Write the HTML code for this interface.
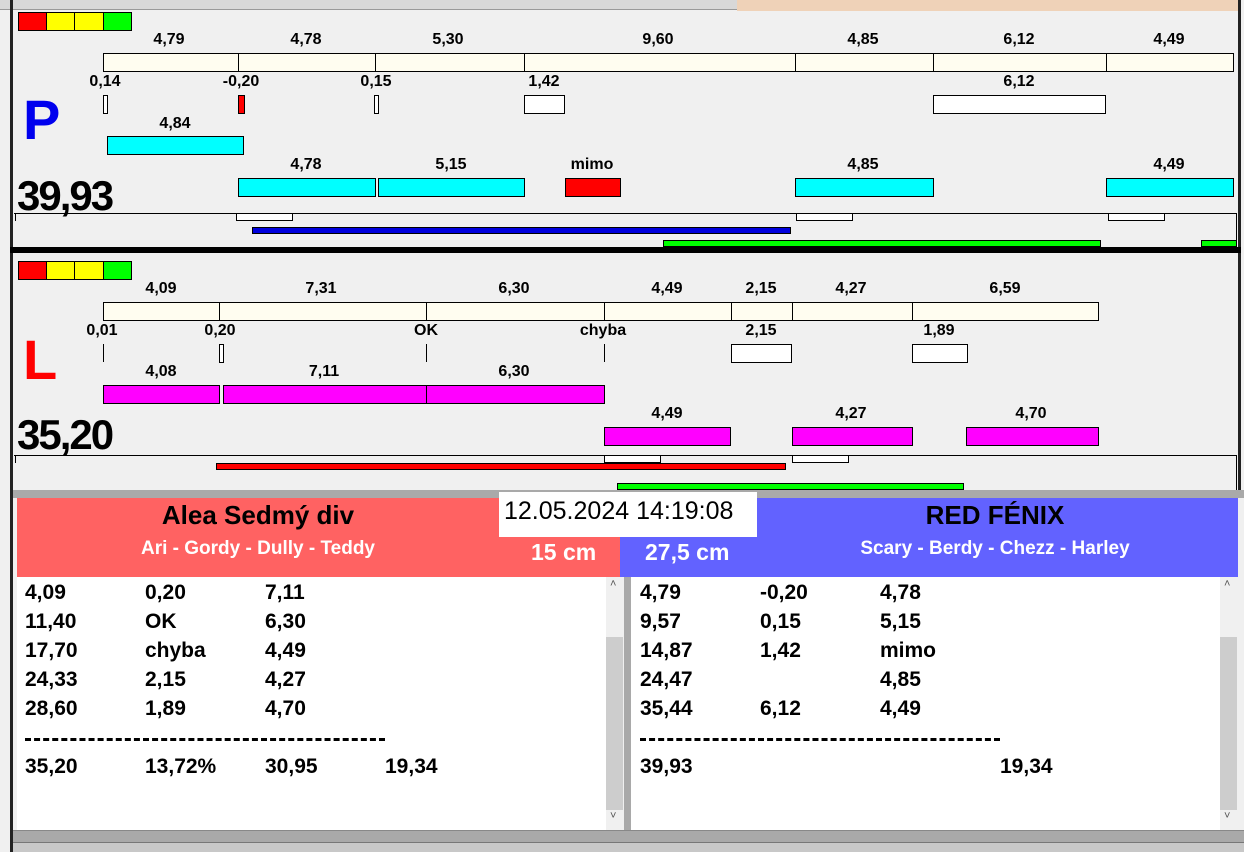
<!DOCTYPE html>
<html><head><meta charset="utf-8"><style>
*{margin:0;padding:0;box-sizing:border-box}
body{width:1244px;height:852px;position:relative;overflow:hidden;background:#f0f0f0;font-family:"Liberation Sans",Arial,sans-serif}
div{position:absolute}
.b{border:1px solid #000}
.t{font-size:16px;font-weight:bold;transform:translateX(-50%);white-space:nowrap;line-height:18px}
.cr{background:#fffdf0}.cy{background:#00ffff}.mg{background:#ff00ff}.w{background:#fff}.r{background:#ff0000}.g{background:#00ff00}.ye{background:#ffff00}
.big{font-size:42px;font-weight:bold;line-height:42px;letter-spacing:-2px}
.row{font-size:21px;font-weight:bold;line-height:24px;white-space:nowrap}
.hd{font-weight:bold;white-space:nowrap;transform:translateX(-50%)}
</style></head><body>
<!-- top strip -->
<div style="left:0;top:0;width:737px;height:10px;background:#d8d8d8;border-bottom:1px solid #999"></div>
<div style="left:737px;top:0;width:503px;height:11px;background:#efd2b8"></div>
<div style="left:10px;top:0;width:3px;height:852px;background:#222"></div>
<div style="left:1238px;top:0;width:3px;height:250px;background:#222"></div>
<div style="left:1238px;top:253px;width:3px;height:240px;background:#222"></div>

<!-- P panel -->
<div class="b r" style="left:18px;top:12px;width:29px;height:19px"></div>
<div class="b ye" style="left:46px;top:12px;width:29px;height:19px"></div>
<div class="b ye" style="left:74px;top:12px;width:30px;height:19px"></div>
<div class="b g" style="left:103px;top:12px;width:29px;height:19px"></div>

<div class="b cr" style="left:103px;top:53px;width:136px;height:19px"></div>
<div class="b cr" style="left:238px;top:53px;width:138px;height:19px"></div>
<div class="b cr" style="left:375px;top:53px;width:150px;height:19px"></div>
<div class="b cr" style="left:524px;top:53px;width:272px;height:19px"></div>
<div class="b cr" style="left:795px;top:53px;width:139px;height:19px"></div>
<div class="b cr" style="left:933px;top:53px;width:174px;height:19px"></div>
<div class="b cr" style="left:1106px;top:53px;width:128px;height:19px"></div>
<div class="t" style="left:169px;top:31px">4,79</div>
<div class="t" style="left:306px;top:31px">4,78</div>
<div class="t" style="left:448px;top:31px">5,30</div>
<div class="t" style="left:658px;top:31px">9,60</div>
<div class="t" style="left:863px;top:31px">4,85</div>
<div class="t" style="left:1019px;top:31px">6,12</div>
<div class="t" style="left:1169px;top:31px">4,49</div>

<div class="t" style="left:105px;top:73px">0,14</div>
<div class="t" style="left:241px;top:73px">-0,20</div>
<div class="t" style="left:376px;top:73px">0,15</div>
<div class="t" style="left:544px;top:73px">1,42</div>
<div class="t" style="left:1019px;top:73px">6,12</div>
<div class="b w" style="left:103px;top:95px;width:5px;height:19px"></div>
<div class="b r" style="left:238px;top:95px;width:7px;height:19px"></div>
<div class="b w" style="left:374px;top:95px;width:5px;height:19px"></div>
<div class="b w" style="left:524px;top:95px;width:41px;height:19px"></div>
<div class="b w" style="left:933px;top:95px;width:173px;height:19px"></div>

<div style="left:23px;top:90px;font-size:56px;font-weight:bold;color:#0000ee;line-height:60px">P</div>
<div class="t" style="left:175px;top:115px">4,84</div>
<div class="b cy" style="left:107px;top:136px;width:137px;height:19px"></div>
<div class="t" style="left:306px;top:156px">4,78</div>
<div class="t" style="left:451px;top:156px">5,15</div>
<div class="t" style="left:592px;top:156px">mimo</div>
<div class="t" style="left:863px;top:156px">4,85</div>
<div class="t" style="left:1169px;top:156px">4,49</div>
<div class="b cy" style="left:238px;top:178px;width:138px;height:19px"></div>
<div class="b cy" style="left:378px;top:178px;width:147px;height:19px"></div>
<div class="b r" style="left:565px;top:178px;width:56px;height:19px"></div>
<div class="b cy" style="left:795px;top:178px;width:139px;height:19px"></div>
<div class="b cy" style="left:1106px;top:178px;width:128px;height:19px"></div>
<div class="big" style="left:17px;top:175px">39,93</div>
<div style="left:14px;top:213px;width:1223px;height:1px;background:#000"></div>
<div style="left:15px;top:213px;width:1px;height:8px;background:#000"></div>
<div style="left:1236px;top:213px;width:1px;height:34px;background:#000"></div>
<div class="b w" style="left:236px;top:213px;width:57px;height:8px"></div>
<div class="b w" style="left:796px;top:213px;width:57px;height:8px"></div>
<div class="b w" style="left:1108px;top:213px;width:57px;height:8px"></div>
<div class="b" style="left:252px;top:227px;width:539px;height:7px;background:#0000dd"></div>
<div class="b g" style="left:663px;top:240px;width:438px;height:7px"></div>
<div class="b g" style="left:1201px;top:240px;width:36px;height:7px"></div>
<div style="left:10px;top:247px;width:1231px;height:6px;background:#000"></div>

<!-- L panel -->
<div class="b r" style="left:18px;top:261px;width:29px;height:19px"></div>
<div class="b ye" style="left:46px;top:261px;width:29px;height:19px"></div>
<div class="b ye" style="left:74px;top:261px;width:30px;height:19px"></div>
<div class="b g" style="left:103px;top:261px;width:29px;height:19px"></div>
<div class="b cr" style="left:103px;top:302px;width:117px;height:19px"></div>
<div class="b cr" style="left:219px;top:302px;width:208px;height:19px"></div>
<div class="b cr" style="left:426px;top:302px;width:179px;height:19px"></div>
<div class="b cr" style="left:604px;top:302px;width:128px;height:19px"></div>
<div class="b cr" style="left:731px;top:302px;width:62px;height:19px"></div>
<div class="b cr" style="left:792px;top:302px;width:121px;height:19px"></div>
<div class="b cr" style="left:912px;top:302px;width:187px;height:19px"></div>
<div class="t" style="left:161px;top:280px">4,09</div>
<div class="t" style="left:321px;top:280px">7,31</div>
<div class="t" style="left:514px;top:280px">6,30</div>
<div class="t" style="left:667px;top:280px">4,49</div>
<div class="t" style="left:761px;top:280px">2,15</div>
<div class="t" style="left:851px;top:280px">4,27</div>
<div class="t" style="left:1005px;top:280px">6,59</div>
<div class="t" style="left:102px;top:322px">0,01</div>
<div class="t" style="left:220px;top:322px">0,20</div>
<div class="t" style="left:426px;top:322px">OK</div>
<div class="t" style="left:603px;top:322px">chyba</div>
<div class="t" style="left:761px;top:322px">2,15</div>
<div class="t" style="left:939px;top:322px">1,89</div>
<div style="left:103px;top:344px;width:1px;height:18px;background:#000"></div>
<div style="left:426px;top:344px;width:1px;height:18px;background:#000"></div>
<div style="left:604px;top:344px;width:1px;height:18px;background:#000"></div>
<div class="b w" style="left:219px;top:344px;width:5px;height:19px"></div>
<div class="b w" style="left:731px;top:344px;width:61px;height:19px"></div>
<div class="b w" style="left:912px;top:344px;width:56px;height:19px"></div>
<div style="left:23px;top:330px;font-size:56px;font-weight:bold;color:#ff0000;line-height:60px">L</div>
<div class="t" style="left:161px;top:363px">4,08</div>
<div class="t" style="left:324px;top:363px">7,11</div>
<div class="t" style="left:514px;top:363px">6,30</div>
<div class="b mg" style="left:103px;top:385px;width:117px;height:19px"></div>
<div class="b mg" style="left:223px;top:385px;width:204px;height:19px"></div>
<div class="b mg" style="left:426px;top:385px;width:179px;height:19px"></div>
<div class="t" style="left:667px;top:405px">4,49</div>
<div class="t" style="left:851px;top:405px">4,27</div>
<div class="t" style="left:1031px;top:405px">4,70</div>
<div class="b mg" style="left:604px;top:427px;width:127px;height:19px"></div>
<div class="b mg" style="left:792px;top:427px;width:121px;height:19px"></div>
<div class="b mg" style="left:966px;top:427px;width:133px;height:19px"></div>
<div class="big" style="left:17px;top:414px">35,20</div>
<div style="left:14px;top:455px;width:1223px;height:1px;background:#000"></div>
<div style="left:15px;top:455px;width:1px;height:8px;background:#000"></div>
<div style="left:1236px;top:455px;width:1px;height:35px;background:#000"></div>
<div class="b w" style="left:604px;top:455px;width:57px;height:8px"></div>
<div class="b w" style="left:792px;top:455px;width:57px;height:8px"></div>
<div class="b r" style="left:216px;top:463px;width:570px;height:7px"></div>
<div class="b g" style="left:617px;top:483px;width:347px;height:7px"></div>

<!-- band -->
<div style="left:13px;top:490px;width:1231px;height:8px;background:#a9a9a9"></div>

<!-- headers -->
<div style="left:17px;top:498px;width:610px;height:79px;background:#ff6262"></div>
<div style="left:620px;top:498px;width:618px;height:79px;background:#6262ff"></div>
<div class="hd" style="left:258px;top:501px;font-size:26px;line-height:28px">Alea Sedmý div</div>
<div class="hd" style="left:258px;top:538px;font-size:19px;color:#fff;line-height:22px">Ari - Gordy - Dully - Teddy</div>
<div style="left:531px;top:539px;font-size:23px;font-weight:bold;color:#fff;line-height:26px">15 cm</div>
<div style="left:645px;top:539px;font-size:23px;font-weight:bold;color:#fff;line-height:26px">27,5 cm</div>
<div class="hd" style="left:995px;top:501px;font-size:26px;line-height:28px">RED FÉNIX</div>
<div class="hd" style="left:995px;top:538px;font-size:19px;color:#fff;line-height:22px">Scary - Berdy - Chezz - Harley</div>
<div style="left:499px;top:492px;width:258px;height:45px;background:#fff;font-size:25px;line-height:38px;padding-left:5px;white-space:nowrap">12.05.2024 14:19:08</div>

<!-- lists -->
<div style="left:17px;top:577px;width:589px;height:253px;background:#fff"></div>
<div style="left:606px;top:577px;width:18px;height:253px;background:#f0f0f0"></div>
<div style="left:606px;top:637px;width:17px;height:173px;background:#cdcdcd"></div>
<div style="left:624px;top:577px;width:7px;height:253px;background:#a9a9a9"></div>
<div style="left:631px;top:577px;width:589px;height:253px;background:#fff"></div>
<div style="left:1220px;top:577px;width:18px;height:253px;background:#f0f0f0"></div>
<div style="left:1220px;top:637px;width:17px;height:173px;background:#cdcdcd"></div>
<div style="left:610px;top:578px;font-size:11px;color:#555">˄</div>
<div style="left:610px;top:810px;font-size:11px;color:#555">˅</div>
<div style="left:1224px;top:578px;font-size:11px;color:#555">˄</div>
<div style="left:1224px;top:810px;font-size:11px;color:#555">˅</div>

<div class="row" style="left:25px;top:581px">4,09</div><div class="row" style="left:145px;top:581px">0,20</div><div class="row" style="left:265px;top:581px">7,11</div>
<div class="row" style="left:25px;top:610px">11,40</div><div class="row" style="left:145px;top:610px">OK</div><div class="row" style="left:265px;top:610px">6,30</div>
<div class="row" style="left:25px;top:639px">17,70</div><div class="row" style="left:145px;top:639px">chyba</div><div class="row" style="left:265px;top:639px">4,49</div>
<div class="row" style="left:25px;top:668px">24,33</div><div class="row" style="left:145px;top:668px">2,15</div><div class="row" style="left:265px;top:668px">4,27</div>
<div class="row" style="left:25px;top:697px">28,60</div><div class="row" style="left:145px;top:697px">1,89</div><div class="row" style="left:265px;top:697px">4,70</div>
<div style="left:25px;top:738px;width:360px;height:3px;border-top:3px dashed #000"></div>
<div class="row" style="left:25px;top:755px">35,20</div><div class="row" style="left:145px;top:755px">13,72%</div><div class="row" style="left:265px;top:755px">30,95</div><div class="row" style="left:385px;top:755px">19,34</div>

<div class="row" style="left:640px;top:581px">4,79</div><div class="row" style="left:760px;top:581px">-0,20</div><div class="row" style="left:880px;top:581px">4,78</div>
<div class="row" style="left:640px;top:610px">9,57</div><div class="row" style="left:760px;top:610px">0,15</div><div class="row" style="left:880px;top:610px">5,15</div>
<div class="row" style="left:640px;top:639px">14,87</div><div class="row" style="left:760px;top:639px">1,42</div><div class="row" style="left:880px;top:639px">mimo</div>
<div class="row" style="left:640px;top:668px">24,47</div><div class="row" style="left:880px;top:668px">4,85</div>
<div class="row" style="left:640px;top:697px">35,44</div><div class="row" style="left:760px;top:697px">6,12</div><div class="row" style="left:880px;top:697px">4,49</div>
<div style="left:640px;top:738px;width:360px;height:3px;border-top:3px dashed #000"></div>
<div class="row" style="left:640px;top:755px">39,93</div><div class="row" style="left:1000px;top:755px">19,34</div>

<div style="left:13px;top:830px;width:1231px;height:22px;background:#a9a9a9;border-top:1px solid #888"></div>
<div style="left:13px;top:842px;width:1231px;height:10px;background:#c8c8c8;border-top:1px solid #777"></div>
</body></html>
